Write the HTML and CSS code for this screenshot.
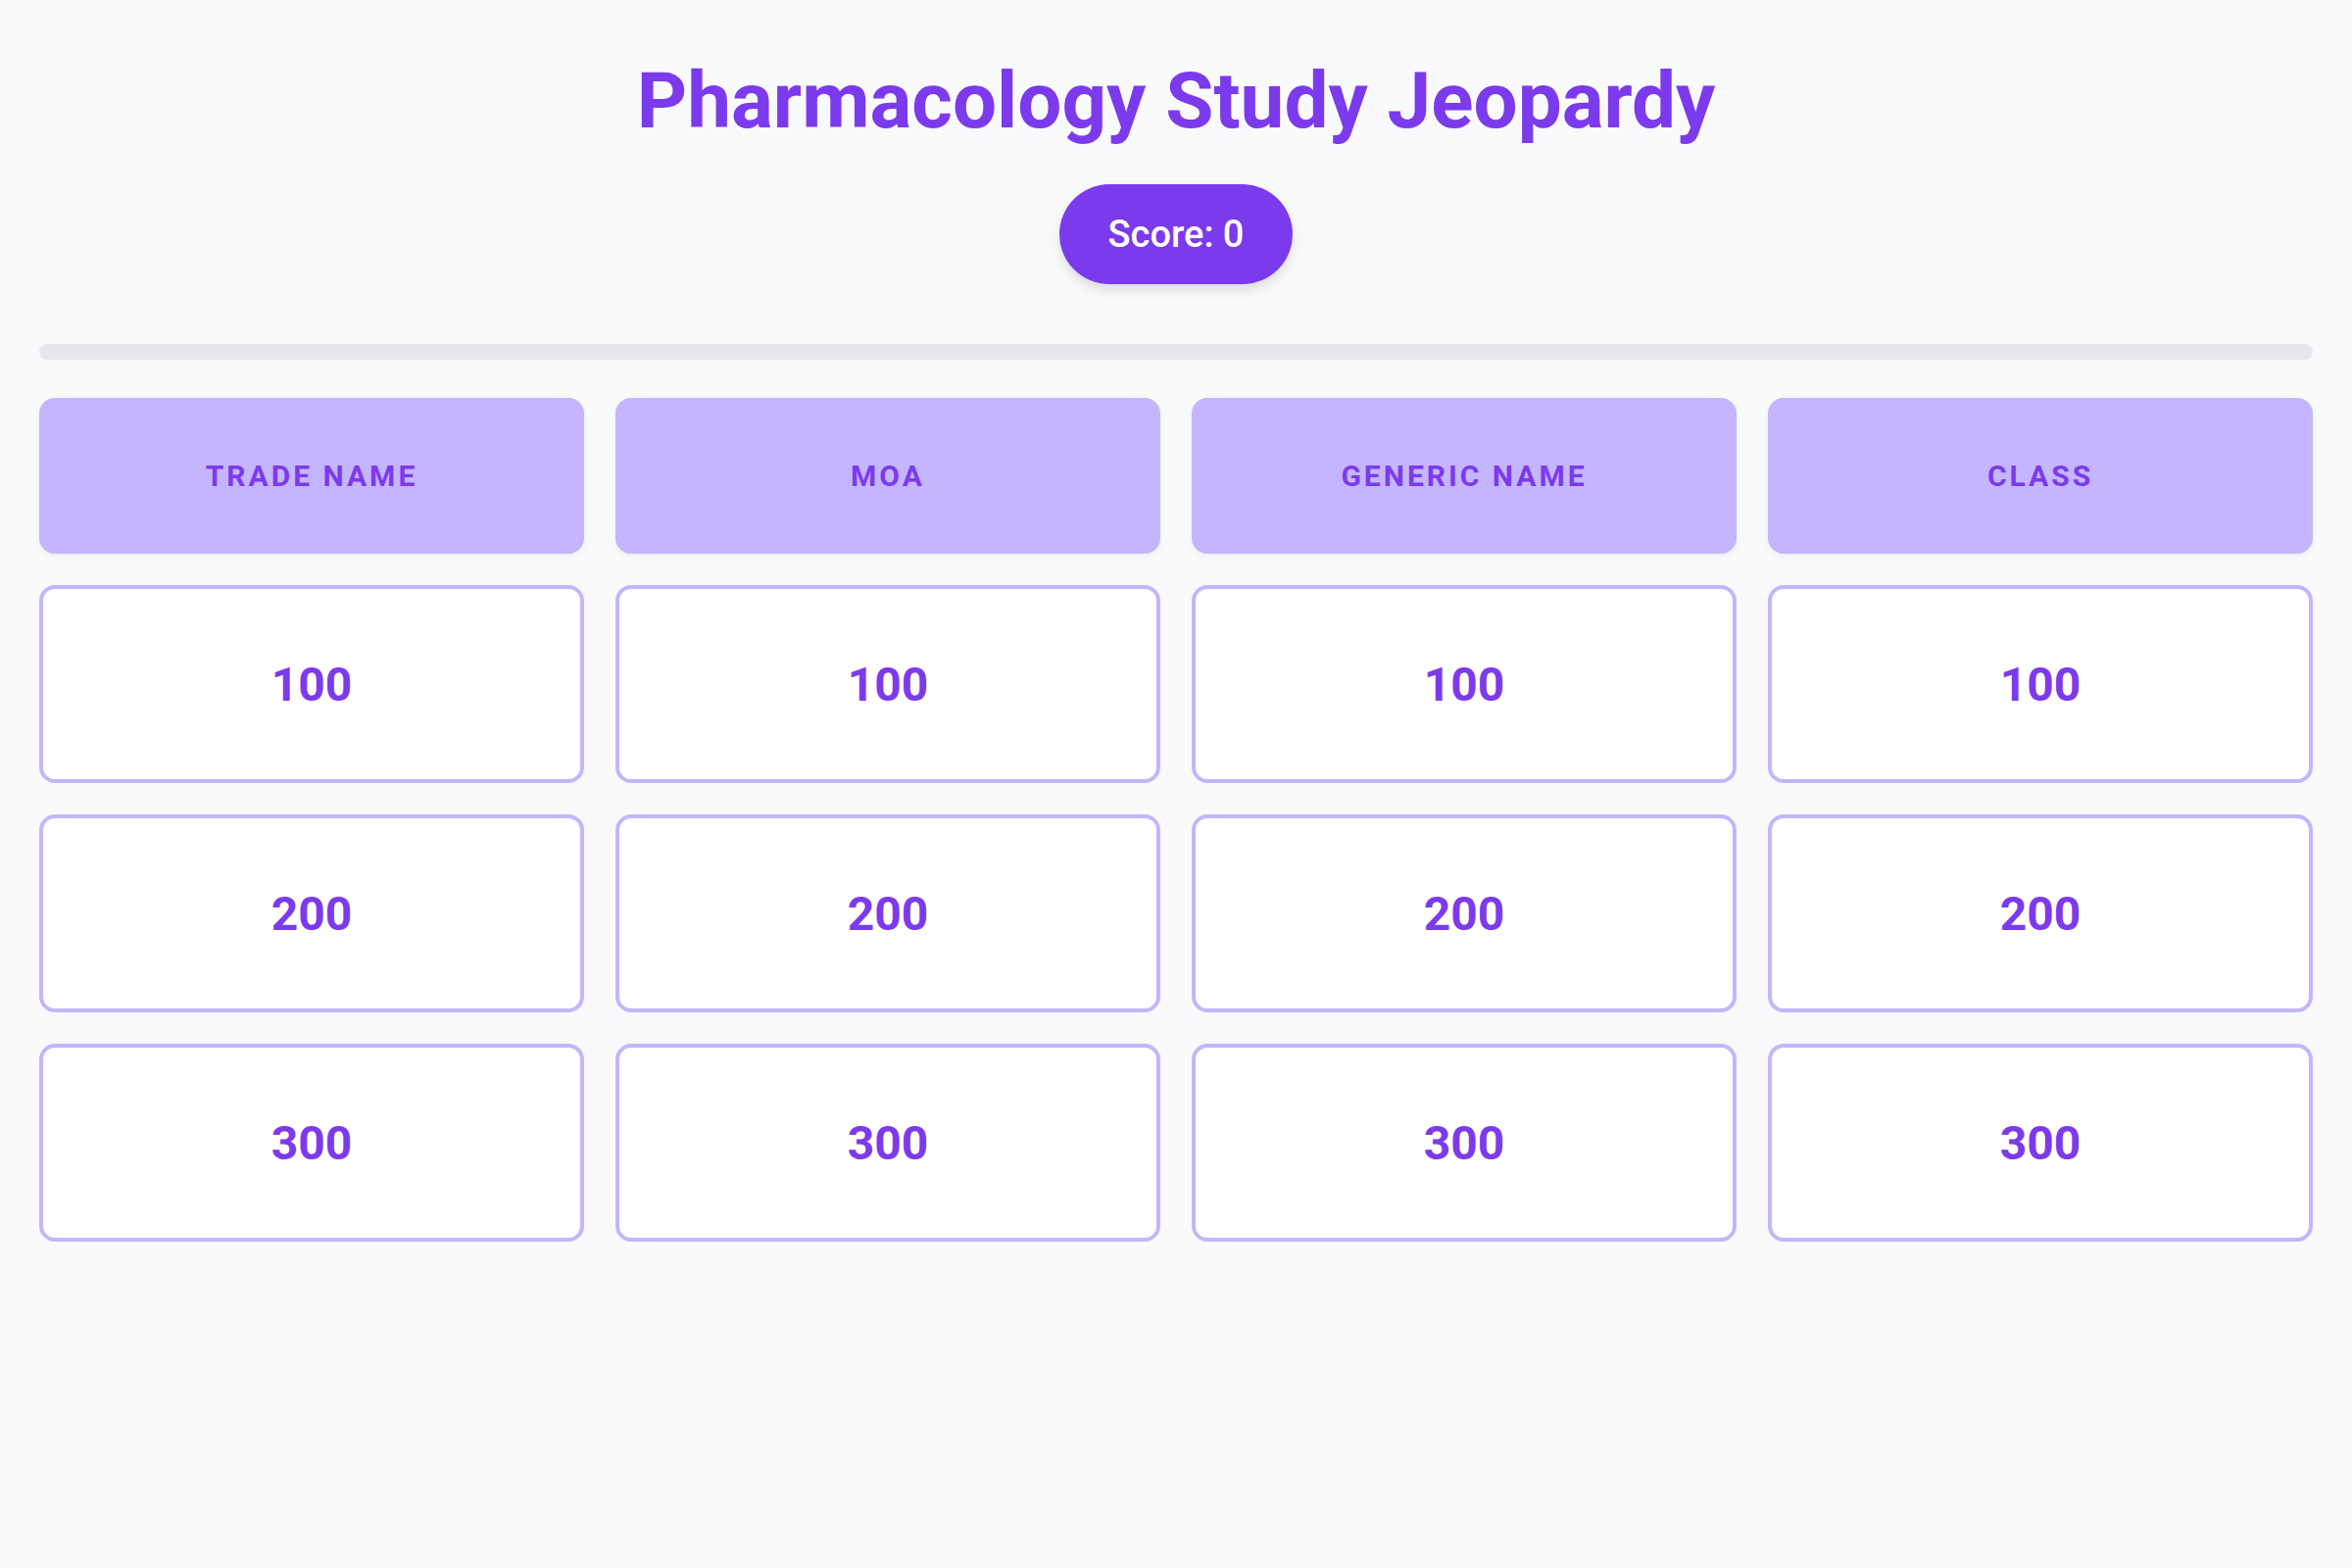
FILE: index.html
```html
<html>
<head>
<meta http-equiv="content-type" content="text/html; charset=UTF-8">
<title>Pharmacology Study Jeopardy</title>
<link rel="stylesheet" href="styles.css">
</head>
<body>
<div class="game_wrap">
	<h1 class="game_title">Pharmacology Study Jeopardy</h1>
	<div class="score_div">
		<div class="score_pill" id="score">Score: 0</div>
	</div>
	<div class="progress_bar"><div class="progress_fill" style="width:0%"></div></div>
	<div class="board">
		<div class="cat_head">Trade Name</div>
		<div class="cat_head">MOA</div>
		<div class="cat_head">Generic Name</div>
		<div class="cat_head">Class</div>

		<div class="clue_cell">100</div>
		<div class="clue_cell">100</div>
		<div class="clue_cell">100</div>
		<div class="clue_cell">100</div>

		<div class="clue_cell">200</div>
		<div class="clue_cell">200</div>
		<div class="clue_cell">200</div>
		<div class="clue_cell">200</div>

		<div class="clue_cell">300</div>
		<div class="clue_cell">300</div>
		<div class="clue_cell">300</div>
		<div class="clue_cell">300</div>
	</div>
</div>
</body>
</html>
```

FILE: styles.css
```css
html, body { margin:0; padding:0; background:#f9fafb; }
body { font-family:Roboto, "Liberation Sans", Arial, sans-serif; color:#7c3aed; }
.game_wrap { padding:55px 40px 40px 40px; }
.game_title { margin:0; font-size:80px; font-weight:700; line-height:96px; text-align:center; color:#7c3aed; }
.score_div { display:flex; justify-content:center; margin-top:37px; }
.score_pill { background:#7c3aed; color:#ffffff; font-size:38px; font-weight:500; line-height:54px; padding:24px 50px; border-radius:999px; box-shadow:0 6px 12px rgba(0,0,0,0.12); }
.progress_bar { margin-top:61px; height:16px; border-radius:8px; background:#e5e7eb; overflow:hidden; }
.progress_fill { height:100%; background:#7c3aed; }
.board { margin-top:39px; display:grid; grid-template-columns:repeat(4, 1fr); grid-template-rows:159px repeat(3, 202px); gap:32px; }
.cat_head { display:flex; align-items:center; justify-content:center; background:#c4b5fd; border-radius:16px; box-shadow:0 2px 6px rgba(0,0,0,0.06); font-size:30px; font-weight:700; letter-spacing:3px; text-transform:uppercase; color:#7c3aed; }
.clue_cell { display:flex; align-items:center; justify-content:center; background:#ffffff; border:4px solid #c4b5fd; border-radius:16px; font-size:48px; font-weight:700; color:#7c3aed; cursor:pointer; }
```
